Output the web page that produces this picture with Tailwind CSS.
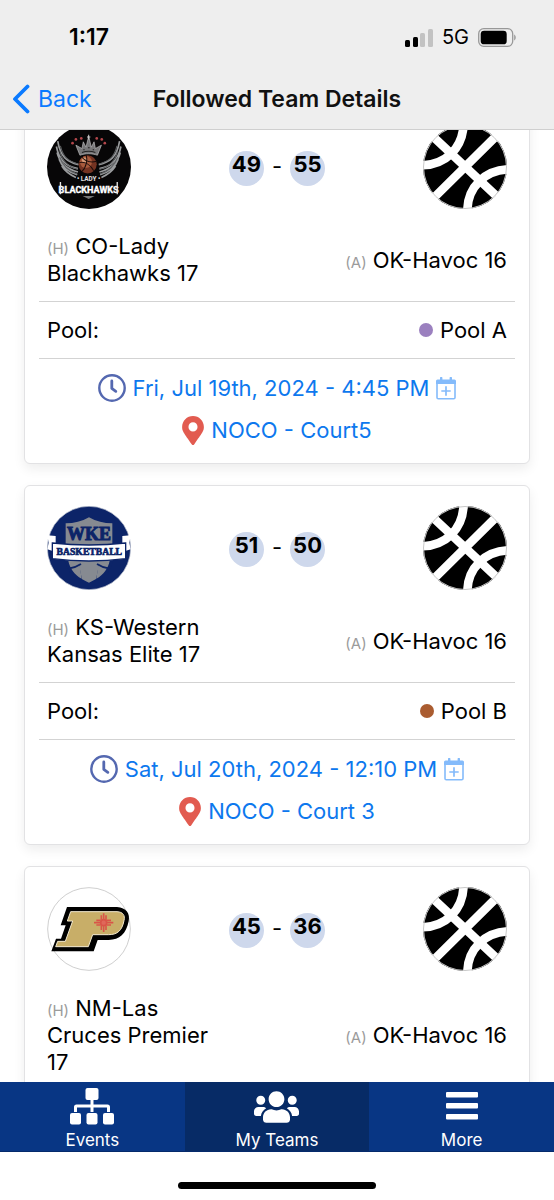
<!DOCTYPE html>
<html lang="en">
<head>
  <meta charset="UTF-8">
  <meta name="viewport" content="width=device-width, initial-scale=1.0">
  <title>Followed Team Details</title>
  <script src="https://cdn.jsdelivr.net/npm/@tailwindcss/browser@4"></script>
</head>
<body class="h-screen flex flex-col overflow-hidden bg-white text-black font-['Inter','Liberation_Sans',sans-serif] text-[22px] leading-[27px]">

  <!-- shared icons -->
  <svg class="hidden">
    <symbol id="ball" viewBox="25 20 252 252">
      <circle cx="151" cy="146" r="126" fill="#000"/>
      <g fill="none" stroke="#fff" stroke-width="26">
        <path d="M52 52 244 232M60 236 246 52"/>
        <path d="M22 141C92 138 145 92 147 14"/>
        <path d="M158 278C158 205 212 155 282 153"/>
      </g>
      <circle cx="151" cy="146" r="124.500" fill="none" stroke="#c8c8c8" stroke-width="3"/>
    </symbol>
    <symbol id="clock" viewBox="0 0 28 28">
      <circle cx="14" cy="14" r="12.700" fill="none" stroke="#5468b0" stroke-width="2.400"/>
      <path d="M13.800 7v7.300l4 3" fill="none" stroke="#5468b0" stroke-width="2.800" stroke-linecap="round" stroke-linejoin="round"/>
    </symbol>
    <symbol id="pin" viewBox="0 0 384 512">
      <path fill="#e25b50" d="M172.268 501.670C26.970 291.031 0 269.413 0 192 0 85.961 85.961 0 192 0s192 85.961 192 192c0 77.413-26.970 99.031-172.268 309.670-9.535 13.774-29.930 13.773-39.464 0zM192 272c44.183 0 80-35.817 80-80s-35.817-80-80-80-80 35.817-80 80 35.817 80 80 80z"/>
    </symbol>
    <symbol id="calendar" viewBox="0 0 20 23">
      <path d="M1 5v15.500a1.300 1.300 0 0 0 1.300 1.300h15.400a1.300 1.300 0 0 0 1.300-1.300V5" fill="none" stroke="#84bbfb" stroke-width="1.600"/>
      <path d="M0 7V4a1.500 1.500 0 0 1 1.500-1.500H4V.700a.6.600 0 0 1 .600-.600h1.200a.6.600 0 0 1 .600.600v1.800h7.200V.700a.6.600 0 0 1 .600-.600h1.200a.6.600 0 0 1 .600.600v1.800h2.500A1.500 1.500 0 0 1 20 4v3z" fill="#84bbfb"/>
      <path d="M10 9.300v9.400M5.300 14h9.400" stroke="#84bbfb" stroke-width="1.700"/>
    </symbol>
  </svg>

  <header class="shrink-0 bg-[#eeeeee] border-b border-[#cfcfcf]">
    <div class="h-[72px] flex items-center justify-between pl-[69px] pr-[38px] pt-[3px]">
      <span class="font-semibold text-[23px]">1:17</span>
      <div class="flex items-center gap-[9px]">
        <svg class="w-7 h-[18px]" viewBox="0 0 28 18">
          <rect x="0" y="11" width="5" height="7" rx="1.500"/>
          <rect x="8" y="8" width="5" height="10" rx="1.500"/>
          <rect x="15" y="4" width="5" height="14" rx="1.500" fill="#c2c2c2"/>
          <rect x="23" y="0" width="5" height="18" rx="1.500" fill="#c2c2c2"/>
        </svg>
        <span class="text-[20px]">5G</span>
        <svg class="w-[38px] h-[19px]" viewBox="0 0 38 19">
          <rect x=".7" y=".7" width="34" height="17.600" rx="5" fill="none" stroke="#989898" stroke-width="1.300"/>
          <rect x="2.700" y="2.700" width="26" height="13.600" rx="3.400"/>
          <path d="M36.200 6.500c2 .8 2 5.200 0 6z" fill="#989898"/>
        </svg>
      </div>
    </div>
    <div class="h-[57px] relative flex items-center justify-center pb-[3px] text-[23px]">
      <button type="button" class="absolute left-3 flex items-center gap-2 text-[#0a7aff]">
        <svg class="w-[18px] h-[30px]" viewBox="0 0 18 30"><path d="M15.500 2.500 3 15l12.500 12.500" fill="none" stroke="currentColor" stroke-width="3.800" stroke-linecap="round" stroke-linejoin="round"/></svg>
        Back
      </button>
      <h1 class="font-semibold text-[#111]">Followed Team Details</h1>
    </div>
  </header>

  <main class="flex-1 min-h-0 overflow-hidden">
    <div class="-mt-[26px] px-6 flex flex-col gap-[21px]">

      <article class="rounded-md border border-[#e2e2e4] bg-white px-[14px] pt-5 pb-3 shadow-[0_5px_12px_rgba(0,0,0,0.07)]">
        <div class="flex items-center justify-between px-2">
          <svg class="size-[84px]" viewBox="22 2 250 250">
            <circle cx="147" cy="127" r="125" fill="#070607"/>
            <g fill="none" stroke="#9a9c9e" stroke-width="5">
              <path d="M54 50c8 48 28 62 62 70M50 66c8 44 32 60 64 66M52 84c8 34 30 50 62 58M58 104c8 24 28 38 54 46M66 124c10 16 24 26 42 34"/>
              <path d="M238 50c-8 48-28 62-62 70M242 66c-8 44-32 60-64 66M240 84c-8 34-30 50-62 58M234 104c-8 24-28 38-54 46M226 124c-10 16-24 26-42 34"/>
            </g>
            <g fill="none" stroke="#5f6163" stroke-width="3">
              <path d="M62 64c8 34 24 46 52 54M60 80c8 34 30 48 54 54M60 98c10 30 34 44 52 50M230 64c-8 34-24 46-52 54M232 80c-8 34-30 48-54 54M232 98c-10 30-34 44-52 50"/>
            </g>
            <path d="M120 92 108 62l18 10 4-20 8 16 8-32 8 32 8-16 4 20 18-10-12 30c-16-6-36-6-52 0z" fill="#777779" stroke="#bdbdbf" stroke-width="2"/>
            <path d="M141 38h10M146 31v14" stroke="#c9c9cb" stroke-width="3"/>
            <path d="M126 84c12-5 28-5 40 0M130 76h4M144 70h5M158 76h4" fill="none" stroke="#222" stroke-width="3"/>
            <g fill="#b4474c"><circle cx="98" cy="56" r="4"/><circle cx="108" cy="45" r="4"/><circle cx="124" cy="42" r="4"/><circle cx="170" cy="42" r="4"/><circle cx="185" cy="45" r="4"/><circle cx="194" cy="56" r="4"/></g>
            <circle cx="143" cy="119" r="27" fill="#743322"/>
            <circle cx="138" cy="112" r="18" fill="#a85a3c"/>
            <circle cx="134" cy="107" r="8" fill="#d79a76"/>
            <path d="M118 114c18-4 34 8 43 24M138 92c6 12 0 38-12 48M126 98c12 14 28 16 44 12" fill="none" stroke="#1b0c0a" stroke-width="3"/>
            <text x="146" y="170" text-anchor="middle" font-family="Roboto" font-weight="700" font-size="19" fill="#e5e2e2">• LADY •</text>
            <text x="146" y="204" text-anchor="middle" font-family="Roboto" font-weight="700" font-size="27" fill="#fff" stroke="#fff" stroke-width="1">BLACKHAWKS</text>
            <path d="M62 172v36M231 172v36" stroke="#e7e7e7" stroke-width="4"/>
            <path d="M128 213h36l-18 9z" fill="#777"/>
          </svg>
          <div class="flex items-center gap-2 pt-0.5 font-bold">
            <span class="size-[35px] rounded-full bg-[#ced8ec] flex items-center justify-center pb-[7px]">49</span>
            <span class="font-normal pb-1">-</span>
            <span class="size-[35px] rounded-full bg-[#ced8ec] flex items-center justify-center pb-[7px]">55</span>
          </div>
          <svg class="size-[84px]"><use href="#ball"/></svg>
        </div>
        <div class="flex items-center justify-between px-2 pt-6 pb-[14px]">
          <p class="w-[38%]"><span class="text-[15px] leading-none text-[#9b9b9b]">(H)</span> CO-Lady Blackhawks 17</p>
          <p class="text-right"><span class="text-[15px] leading-none text-[#9b9b9b]">(A)</span> OK-Havoc 16</p>
        </div>
        <div class="h-[58px] flex items-center justify-between px-2 border-y border-[#d3d3d3]">
          <span>Pool:</span>
          <span class="flex items-center gap-[7px]"><i class="size-[14px] rounded-full bg-[#9b80bf]"></i>Pool A</span>
        </div>
        <div class="pt-2 text-[#0d78ee]">
          <a href="#" class="h-[42px] flex items-center justify-center gap-[7px]">
            <svg class="size-7"><use href="#clock"/></svg>
            Fri, Jul 19th, 2024 - 4:45 PM
            <svg class="w-5 h-[23px]"><use href="#calendar"/></svg>
          </a>
          <a href="#" class="h-[42px] flex items-center justify-center gap-[7px]">
            <svg class="w-[22px] h-[29px]"><use href="#pin"/></svg>
            NOCO - Court5
          </a>
        </div>
      </article>

      <article class="rounded-md border border-[#e2e2e4] bg-white px-[14px] pt-5 pb-3 shadow-[0_5px_12px_rgba(0,0,0,0.07)]">
        <div class="flex items-center justify-between px-2">
          <svg class="size-[84px]" viewBox="20 20 252 252">
            <circle cx="146" cy="146" r="125" fill="#0c2468" stroke="#b9bfcd" stroke-width="2"/>
            <path d="M76 72c26 0 48-6 70-18 22 12 44 18 70 18v74c0 60-30 86-70 104-40-18-70-44-70-104z" fill="#868a91"/>
            <path d="M74 176h38l14 70C96 234 74 208 74 176zM218 176h-38l-14 70c30-12 52-38 52-70z" fill="#0c2468"/>
            <path d="M84 184c4 22 18 42 40 54l-8-54zM208 184c-4 22-18 42-40 54l8-54z" fill="#868a91"/>
            <path d="M84 208c14-2 26-6 38-14M208 208c-14-2-26-6-38-14" fill="none" stroke="#0c2468" stroke-width="5"/>
            <path d="M21 108 46 110V158L21 150 25 130zM271 108 246 110V158L271 150 267 130z" fill="#fff"/>
            <path d="M36 131c72 8 148 8 220 0v47c-72 9-148 9-220 0z" fill="#fff" stroke="#0c2468" stroke-width="4"/>
            <text x="146" y="121" text-anchor="middle" font-family="Liberation Serif" font-weight="700" font-size="54" fill="#0c2468" stroke="#0c2468" stroke-width="3">WKE</text>
            <text x="147" y="168" text-anchor="middle" font-family="Liberation Serif" font-weight="700" font-size="29" fill="#0c2468" stroke="#0c2468" stroke-width="2">BASKETBALL</text>
          </svg>
          <div class="flex items-center gap-2 pt-0.5 font-bold">
            <span class="size-[35px] rounded-full bg-[#ced8ec] flex items-center justify-center pb-[7px]">51</span>
            <span class="font-normal pb-1">-</span>
            <span class="size-[35px] rounded-full bg-[#ced8ec] flex items-center justify-center pb-[7px]">50</span>
          </div>
          <svg class="size-[84px]"><use href="#ball"/></svg>
        </div>
        <div class="flex items-center justify-between px-2 pt-6 pb-[14px]">
          <p class="w-[38%]"><span class="text-[15px] leading-none text-[#9b9b9b]">(H)</span> KS-Western Kansas Elite 17</p>
          <p class="text-right"><span class="text-[15px] leading-none text-[#9b9b9b]">(A)</span> OK-Havoc 16</p>
        </div>
        <div class="h-[58px] flex items-center justify-between px-2 border-y border-[#d3d3d3]">
          <span>Pool:</span>
          <span class="flex items-center gap-[7px]"><i class="size-[14px] rounded-full bg-[#aa5c30]"></i>Pool B</span>
        </div>
        <div class="pt-2 text-[#0d78ee]">
          <a href="#" class="h-[42px] flex items-center justify-center gap-[7px]">
            <svg class="size-7"><use href="#clock"/></svg>
            Sat, Jul 20th, 2024 - 12:10 PM
            <svg class="w-5 h-[23px]"><use href="#calendar"/></svg>
          </a>
          <a href="#" class="h-[42px] flex items-center justify-center gap-[7px]">
            <svg class="w-[22px] h-[29px]"><use href="#pin"/></svg>
            NOCO - Court 3
          </a>
        </div>
      </article>

      <article class="rounded-md border border-[#e2e2e4] bg-white px-[14px] pt-5 pb-3 shadow-[0_5px_12px_rgba(0,0,0,0.07)]">
        <div class="flex items-center justify-between px-2">
          <svg class="size-[84px]" viewBox="20 24 252 252">
            <circle cx="146" cy="150" r="124" fill="#fff" stroke="#cfcfcf" stroke-width="3"/>
            <path d="M80 84h150c28 2 40 20 35 43-8 38-27 55-60 56h-33l-12 34H33l14-38h15l14-40H61z" fill="#000"/>
            <path d="M91 98h139c18 1 25 11 21 27-6 30-20 42-46 42h-48l-13 36H46l6-16h23l22-61H81z" fill="#c8ae68" stroke="#f3ead0" stroke-width="3"/>
            <g fill="none" stroke="#d95448" stroke-width="5">
              <circle cx="190" cy="131" r="9" fill="#e0675a"/>
              <path d="M183 122v-13M190 121v-18M197 122v-13M183 140v13M190 141v18M197 140v13M181 124h-13M180 131h-19M181 138h-13M199 124h13M200 131h19M199 138h13"/>
            </g>
          </svg>
          <div class="flex items-center gap-2 pt-0.5 font-bold">
            <span class="size-[35px] rounded-full bg-[#ced8ec] flex items-center justify-center pb-[7px]">45</span>
            <span class="font-normal pb-1">-</span>
            <span class="size-[35px] rounded-full bg-[#ced8ec] flex items-center justify-center pb-[7px]">36</span>
          </div>
          <svg class="size-[84px]"><use href="#ball"/></svg>
        </div>
        <div class="flex items-center justify-between px-2 pt-6 pb-[14px]">
          <p class="w-[38%]"><span class="text-[15px] leading-none text-[#9b9b9b]">(H)</span> NM-Las Cruces Premier 17</p>
          <p class="text-right"><span class="text-[15px] leading-none text-[#9b9b9b]">(A)</span> OK-Havoc 16</p>
        </div>
      </article>

    </div>
  </main>

  <nav class="shrink-0 h-[70px] grid grid-cols-3 bg-[#083684] border-b border-[#052a6b] text-white text-[17px] leading-5">
    <a href="#" class="flex flex-col items-center justify-end pb-px gap-1">
      <svg class="w-11 h-[38px]" viewBox="0 0 44 38" fill="currentColor">
        <rect x="15.500" y="0" width="13" height="12" rx="2"/>
        <path d="M22 11v13M5.500 24v-5a1 1 0 0 1 1-1h31a1 1 0 0 1 1 1v5" fill="none" stroke="currentColor" stroke-width="3"/>
        <rect x="0" y="25" width="11" height="11.500" rx="2"/>
        <rect x="16.500" y="25" width="11" height="11.500" rx="2"/>
        <rect x="33" y="25" width="11" height="11.500" rx="2"/>
      </svg>
      Events
    </a>
    <a href="#" class="flex flex-col items-center justify-end pb-px gap-1 bg-[#072b66]">
      <svg class="w-[45px] h-[38px]" viewBox="0 0 640 512" fill="currentColor"><path d="M96 224c35.300 0 64-28.700 64-64s-28.700-64-64-64-64 28.700-64 64 28.700 64 64 64zm448 0c35.300 0 64-28.700 64-64s-28.700-64-64-64-64 28.700-64 64 28.700 64 64 64zm32 32h-64c-17.600 0-33.500 7.100-45.100 18.600 40.300 22.100 68.900 62 75.100 109.400h66c17.700 0 32-14.300 32-32v-32c0-35.300-28.700-64-64-64zm-256 0c61.900 0 112-50.100 112-112S381.900 32 320 32 208 82.100 208 144s50.100 112 112 112zm76.800 32h-8.300c-20.800 10-43.900 16-68.500 16s-47.600-6-68.500-16h-8.300C179.600 288 128 339.600 128 403.200V432c0 26.500 21.500 48 48 48h288c26.500 0 48-21.500 48-48v-28.800c0-63.600-51.600-115.200-115.200-115.200zm-223.700-13.400C161.500 263.100 145.600 256 128 256H64c-35.300 0-64 28.700-64 64v32c0 17.700 14.300 32 32 32h65.900c6.300-47.400 34.900-87.300 75.200-109.400z"/></svg>
      My Teams
    </a>
    <a href="#" class="flex flex-col items-center justify-end pb-px gap-1">
      <svg class="w-8 h-[38px]" viewBox="0 0 32 38" fill="currentColor">
        <rect y="4" width="32" height="5.500" rx="1"/>
        <rect y="15" width="32" height="5.500" rx="1"/>
        <rect y="26" width="32" height="5.500" rx="1"/>
      </svg>
      More
    </a>
  </nav>
  <div class="shrink-0 h-12 flex items-end justify-center pb-[11px]">
    <div class="w-[198px] h-[7px] rounded-full bg-black"></div>
  </div>
</body>
</html>
